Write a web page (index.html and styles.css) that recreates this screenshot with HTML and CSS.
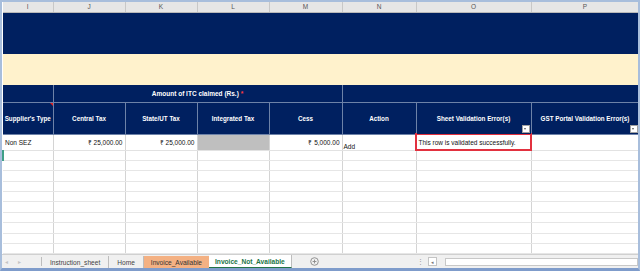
FILE: index.html
```html
<!DOCTYPE html>
<html lang="en">
<head>
  <meta charset="UTF-8" />
  <title>Invoice_Not_Available</title>
  <link rel="stylesheet" href="styles.css">
</head>
<body>
  <div class="window">
    <table class="sheet">
      <colgroup>
        <col style="width:50px">
        <col style="width:72px">
        <col style="width:72px">
        <col style="width:72px">
        <col style="width:73px">
        <col style="width:74px">
        <col style="width:115px">
        <col style="width:108px">
      </colgroup>
      <tr class="letters">
        <td>I</td><td>J</td><td>K</td><td>L</td><td>M</td><td>N</td><td>O</td><td>P</td>
      </tr>
      <tr class="banner"><td colspan="8"></td></tr>
      <tr class="cream"><td colspan="8"></td></tr>
      <tr class="group">
        <td></td>
        <td colspan="4">Amount of ITC claimed (Rs.) <span class="req">*</span></td>
        <td colspan="3"></td>
      </tr>
      <tr class="heads">
        <td class="marked">Supplier's Type</td>
        <td>Central Tax</td>
        <td>State/UT Tax</td>
        <td>Integrated Tax</td>
        <td>Cess</td>
        <td>Action</td>
        <td class="filtered">Sheet Validation Error(s)<span class="filter"></span></td>
        <td class="filtered">GST Portal Validation Error(s)<span class="filter"></span></td>
      </tr>
      <tr class="data">
        <td>Non SEZ</td>
        <td class="num">₹ 25,000.00</td>
        <td class="num">₹ 25,000.00</td>
        <td class="locked"></td>
        <td class="num">₹ 5,000.00</td>
        <td class="low">Add</td>
        <td class="ok">This row is validated successfully.</td>
        <td></td>
      </tr>
      <tr class="empty"><td class="active"></td><td></td><td></td><td></td><td></td><td></td><td></td><td></td></tr>
      <tr class="empty"><td></td><td></td><td></td><td></td><td></td><td></td><td></td><td></td></tr>
      <tr class="empty"><td></td><td></td><td></td><td></td><td></td><td></td><td></td><td></td></tr>
      <tr class="empty"><td></td><td></td><td></td><td></td><td></td><td></td><td></td><td></td></tr>
      <tr class="empty"><td></td><td></td><td></td><td></td><td></td><td></td><td></td><td></td></tr>
      <tr class="empty"><td></td><td></td><td></td><td></td><td></td><td></td><td></td><td></td></tr>
      <tr class="empty"><td></td><td></td><td></td><td></td><td></td><td></td><td></td><td></td></tr>
      <tr class="empty"><td></td><td></td><td></td><td></td><td></td><td></td><td></td><td></td></tr>
      <tr class="empty"><td></td><td></td><td></td><td></td><td></td><td></td><td></td><td></td></tr>
      <tr class="empty"><td></td><td></td><td></td><td></td><td></td><td></td><td></td><td></td></tr>
    </table>

    <div class="tabbar">
      <div class="arrows"><span>&#9666;</span><span>&#9656;</span></div>
      <div class="tab">Instruction_sheet</div>
      <div class="tab">Home</div>
      <div class="tab orange">Invoice_Available</div>
      <div class="tab current">Invoice_Not_Available</div>
      <div class="add">
        <svg width="9" height="9" viewBox="0 0 9 9">
          <circle cx="4.5" cy="4.5" r="3.8" fill="none" stroke="#8a8a8a" stroke-width="0.9"/>
          <path d="M4.5 2.6v3.8M2.6 4.5h3.8" stroke="#8a8a8a" stroke-width="0.9"/>
        </svg>
      </div>
      <div class="spacer"></div>
      <div class="dots">&#8942;</div>
      <div class="scrollbtn">&#9666;</div>
      <div class="track"></div>
    </div>
  </div>
</body>
</html>
```

FILE: styles.css
```css
* {
  box-sizing: border-box;
}

body {
  margin: 0;
  font-family: "Liberation Sans", Arial, sans-serif;
  background: #fff;
}

.window {
  width: 640px;
  height: 271px;
  border: 2px solid #a8bedc;
  border-bottom: 3px solid #7f9ccb;
  display: flex;
  flex-direction: column;
  overflow: hidden;
}

.sheet {
  border-collapse: collapse;
  table-layout: fixed;
  width: 636px;
  font-size: 6.5px;
}

.sheet td {
  padding: 0 2px;
  white-space: nowrap;
  overflow: hidden;
}

.letters td {
  height: 10px;
  background: #e6e6e6;
  color: #555;
  text-align: center;
  font-size: 6.5px;
  border-right: 1px solid #c8c8c8;
  border-bottom: 1px solid #b9b9b9;
}

.banner td {
  height: 42px;
  background: #002060;
}

.cream td {
  height: 31px;
  background: #fff2cc;
}

.group td {
  height: 17px;
  background: #002060;
  color: #fff;
  font-weight: bold;
  text-align: center;
  border-right: 1px solid #6d82a8;
  border-bottom: 1px solid #6d82a8;
}

.req {
  color: #ff3b3b;
}

.heads td {
  height: 32px;
  padding: 0 1px;
  background: #002060;
  color: #fff;
  font-size: 6.3px;
  font-weight: bold;
  text-align: center;
  border-right: 1px solid #6d82a8;
  border-bottom: 1px solid #6d82a8;
}

.heads .marked {
  position: relative;
}

.heads .marked::after {
  content: "";
  position: absolute;
  top: 0;
  right: 0;
  border-top: 3px solid #e02020;
  border-left: 3px solid transparent;
}

.heads .filtered {
  position: relative;
}

.filter {
  position: absolute;
  right: 1px;
  bottom: 1px;
  width: 8px;
  height: 8px;
  background: #fff;
  border: 1px solid #a0a0a0;
}

.filter::after {
  content: "";
  position: absolute;
  left: 1.5px;
  top: 2.5px;
  border-top: 2px solid #555;
  border-left: 1.5px solid transparent;
  border-right: 1.5px solid transparent;
}

.data td {
  height: 16px;
  color: #111;
  border-right: 1px solid #d4d4d4;
  border-bottom: 1px solid #e2e2e2;
}

.data .num {
  text-align: right;
}

.data .locked {
  background: #bfbfbf;
}

.data .low {
  vertical-align: bottom;
  padding-left: 1px;
}

.data .ok {
  outline: 2px solid #e2313f;
  outline-offset: -1px;
}

.empty td {
  height: 10.4px;
  padding: 0;
  border-right: 1px solid #d4d4d4;
  border-bottom: 1px solid #e6e6e6;
}

.empty .active {
  border-left: 2px solid #3f9f87;
}

.tabbar {
  flex: 1;
  display: flex;
  align-items: stretch;
  background: #f0f0f0;
  border-top: 1px solid #d0d0d0;
  font-size: 6.6px;
  color: #444;
}

.arrows {
  width: 40px;
  display: flex;
  align-items: center;
  gap: 10px;
  padding-left: 3px;
  color: #c4c4c4;
  font-size: 6px;
  border-right: 1px solid #bdbdbd;
  margin: 2px 0;
}

.tab {
  display: flex;
  align-items: center;
  padding: 0 8px;
  border-right: 1px solid #bdbdbd;
  margin: 1px 0 0;
}

.tab.orange {
  background: #f4b183;
  color: #333;
  border-right: none;
  padding: 0 7px;
}

.tab.current {
  background: #fff;
  color: #217346;
  font-weight: bold;
  border-bottom: 1px solid #217346;
  margin-top: 0;
  padding: 0 6px;
}

.add {
  display: flex;
  align-items: center;
  margin-left: 18px;
}

.spacer {
  flex: 1;
}

.dots {
  display: flex;
  align-items: center;
  color: #999;
  font-size: 7px;
  margin-right: 4px;
}

.scrollbtn {
  align-self: center;
  width: 9px;
  height: 9px;
  background: #fff;
  border: 1px solid #c4c4c4;
  font-size: 5px;
  color: #777;
  display: flex;
  align-items: center;
  justify-content: center;
  margin-right: 8px;
}

.track {
  align-self: center;
  width: 193px;
  height: 8px;
  background: #fff;
  border: 1px solid #c8c8c8;
}
```
